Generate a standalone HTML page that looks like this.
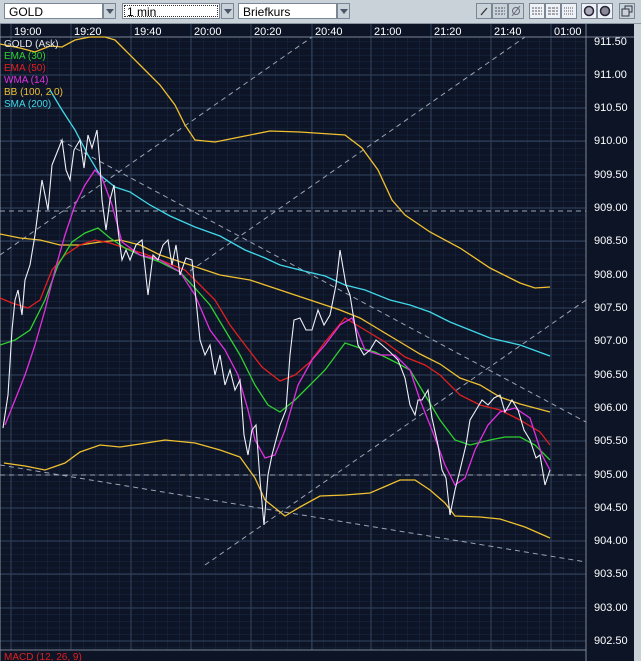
<!DOCTYPE html>
<html><head><meta charset="utf-8"><style>
html,body{margin:0;padding:0;width:641px;height:661px;overflow:hidden;background:#0c1426;font-family:"Liberation Sans",sans-serif}
.tb{position:absolute;left:0;top:0;width:641px;height:23px;background:#c9d1d9;border-bottom:1px solid #8a96a2}
.dd{position:absolute;top:3px;height:16px;background:#fff;border:1px solid #7a8694;font-size:12px;line-height:16px;padding-left:4px;box-sizing:border-box}
.ar{position:absolute;top:3px;width:13px;height:16px;background:#c9d1d9;border:1px solid #7a8694;box-sizing:border-box}
.ar:after{content:"";position:absolute;left:2px;top:5px;border-left:4px solid transparent;border-right:4px solid transparent;border-top:5px solid #4a5666}
.bt{position:absolute;top:3px;width:16px;height:16px;border:1px solid #7a8694;box-sizing:border-box;background:#c9d1d9}
.bw{background:#eef2f6}
.bt svg{position:absolute;left:1px;top:1px}
</style></head><body>
<div class="tb">
<div class="dd" style="left:4px;width:99px">GOLD</div><div class="ar" style="left:103px"></div>
<div class="dd" style="left:122px;width:98px;outline:1px dotted #333;outline-offset:-3px">1 min</div><div class="ar" style="left:221px"></div>
<div class="dd" style="left:238px;width:99px">Briefkurs</div><div class="ar" style="left:337px"></div>
<div class="bt" style="left:476px"><svg width="12" height="12"><path d="M3 10L9 3" stroke="#333" stroke-width="1.3"/></svg></div>
<div class="bt" style="left:492px"><svg width="12" height="12"><path d="M1 3H11M1 6H11M1 9H11" stroke="#556" stroke-dasharray="2,1"/></svg></div>
<div class="bt" style="left:508px"><svg width="12" height="12"><circle cx="6" cy="6" r="3.5" fill="none" stroke="#667"/><path d="M2 11L10 1" stroke="#667"/></svg></div>
<div class="bt bw" style="left:529px"><svg width="12" height="12"><path d="M1 3H11M1 6H11M1 9H11" stroke="#556" stroke-dasharray="2,1"/></svg></div>
<div class="bt bw" style="left:545px"><svg width="12" height="12"><path d="M1 3H11M1 6H11M1 9H11" stroke="#556" stroke-dasharray="3,1"/></svg></div>
<div class="bt bw" style="left:561px"><svg width="12" height="12"><path d="M1 3H11M1 6H11M1 9H11" stroke="#556" stroke-dasharray="1,1"/></svg></div>
<div class="bt bw" style="left:581px"><svg width="12" height="12"><circle cx="6" cy="6" r="4.5" fill="#aab" stroke="#223" stroke-width="1.5"/></svg></div>
<div class="bt bw" style="left:597px"><svg width="12" height="12"><circle cx="6" cy="6" r="4.5" fill="#889" stroke="#223" stroke-width="1.5"/></svg></div>
<div class="bt" style="left:619px"><svg width="12" height="12"><rect x="4" y="1" width="7" height="6" fill="none" stroke="#334"/><rect x="1" y="4" width="7" height="7" fill="#c9d1d9" stroke="#334"/></svg></div>
</div>
<svg width="641" height="661" style="position:absolute;left:0;top:0" xmlns="http://www.w3.org/2000/svg">
<defs>
<pattern id="g" x="11" y="8.3" width="12" height="6.66" patternUnits="userSpaceOnUse"><path d="M0 0V6.66M0 0H12" stroke="#1b2a44" stroke-width="1" fill="none"/></pattern>
</defs>
<rect x="0" y="37" width="586" height="613" fill="url(#g)"/>
<g stroke="#34435e" stroke-width="1">
<path d="M11 24V650M71 24V650M131 24V650M191 24V650M251 24V650M312 24V650M371 24V650M431 24V650M491 24V650M551 24V650"/>
<path d="M0 75H586M0 108H586M0 141H586M0 175H586M0 208H586M0 241H586M0 275H586M0 308H586M0 341H586M0 375H586M0 408H586M0 441H586M0 475H586M0 508H586M0 541H586M0 574H586M0 608H586M0 641H586"/>
</g>
<path d="M0 37H641M586 24V661M0 650H586" stroke="#7c8696" stroke-width="1"/>
<rect x="634" y="24" width="7" height="637" fill="#c9d1d9"/>
<path d="M0 24V661" stroke="#8a96a2"/>
<g fill="#fff" font-size="11">
<text x="14" y="35">19:00</text><text x="74" y="35">19:20</text><text x="134" y="35">19:40</text><text x="194" y="35">20:00</text><text x="254" y="35">20:20</text><text x="315" y="35">20:40</text><text x="374" y="35">21:00</text><text x="434" y="35">21:20</text><text x="494" y="35">21:40</text><text x="554" y="35">01:00</text>
</g>
<g fill="#fff" font-size="11">
<text x="594" y="45">911.50</text><text x="594" y="78">911.00</text><text x="594" y="111">910.50</text><text x="594" y="144">910.00</text><text x="594" y="178">909.50</text><text x="594" y="211">909.00</text><text x="594" y="244">908.50</text><text x="594" y="278">908.00</text><text x="594" y="311">907.50</text><text x="594" y="344">907.00</text><text x="594" y="378">906.50</text><text x="594" y="411">906.00</text><text x="594" y="444">905.50</text><text x="594" y="478">905.00</text><text x="594" y="511">904.50</text><text x="594" y="544">904.00</text><text x="594" y="577">903.50</text><text x="594" y="611">903.00</text><text x="594" y="644">902.50</text>
</g>
<g stroke="#9aa4b4" stroke-width="1" stroke-dasharray="5,4" fill="none">
<path d="M0 211H586M0 475H586"/>
<path d="M0 255L312 37"/><path d="M190 271L525 37"/><path d="M205 565L586 300"/>
<path d="M60 140L586 422"/><path d="M0 465L586 562"/>
</g>
<g fill="none" stroke-width="1.3">
<polyline stroke="#f0c030" points="0,44 20,48 35,52 50,46 62,47 75,40 90,37 105,37 115,40 125,50 140,65 160,85 175,105 185,125 195,140 215,142 240,137 270,131 300,132 345,135 362,148 378,170 392,200 405,215 430,232 460,248 490,268 520,283 535,288 550,287"/>
<polyline stroke="#f0c030" points="4,463 25,466 45,470 65,463 80,452 100,445 120,447 140,444 165,440 195,443 220,450 240,457 255,478 265,500 285,516 300,507 320,496 345,495 370,493 400,480 415,480 430,490 445,503 455,516 480,517 500,519 525,527 550,538"/>
<polyline stroke="#f0c030" points="0,234 20,238 40,240 60,245 80,245 100,242 120,240 140,245 160,255 190,265 220,275 250,280 280,290 310,300 340,310 360,318 380,330 400,342 420,354 440,364 460,378 480,385 500,397 520,404 550,412"/>
<polyline stroke="#40d8e8" points="50,90 62,110 75,130 88,155 100,175 115,187 130,192 150,205 170,216 195,227 220,236 245,250 265,258 280,265 300,270 325,276 345,285 365,290 390,300 410,305 430,312 450,322 470,330 490,338 520,345 550,356"/>
<polyline stroke="#e02020" points="0,298 12,303 28,308 40,300 52,270 65,255 80,245 95,240 110,243 125,248 145,254 165,262 185,270 200,285 215,300 230,325 245,345 262,367 280,381 295,375 310,362 325,342 345,318 365,330 385,342 405,357 425,365 440,375 460,395 480,405 500,410 520,420 540,432 550,445"/>
<polyline stroke="#30d030" points="0,345 15,340 30,330 45,300 58,265 72,242 85,233 98,228 110,238 125,248 140,255 160,262 180,272 195,288 210,305 225,330 240,355 255,385 268,405 280,412 295,400 310,385 325,370 345,343 360,348 375,352 395,362 410,370 425,395 440,420 455,440 470,445 490,440 505,437 520,437 535,445 550,460"/>
<polyline stroke="#e030e0" points="5,425 15,400 25,375 35,345 45,310 55,270 65,235 75,205 85,185 95,170 102,178 112,205 122,242 140,255 160,260 180,272 195,295 210,330 225,350 238,375 248,410 255,440 265,458 275,455 285,430 298,385 312,360 325,345 340,325 352,318 365,350 380,355 395,355 410,370 420,400 432,430 445,465 455,485 465,478 475,450 488,425 500,412 515,408 530,418 542,455 550,470"/>
<polyline stroke="#f0f0f8" stroke-width="1.1" points="3,428 8,395 12,330 15,300 18,290 22,315 25,280 30,265 35,235 42,180 48,210 52,165 58,150 62,140 66,170 70,180 74,150 80,140 84,168 88,135 92,148 97,130 100,165 102,200 106,230 110,200 114,185 118,230 122,260 126,250 130,260 136,245 142,240 148,295 153,255 158,260 163,245 168,240 172,265 176,245 180,275 186,258 192,260 196,300 200,340 205,355 210,345 215,375 220,355 225,385 230,370 235,390 240,380 244,435 248,455 252,430 256,425 260,480 264,525 268,475 272,455 276,440 280,425 286,410 290,355 294,320 300,318 306,330 312,330 318,310 324,325 330,315 336,285 340,250 346,285 350,295 354,320 358,345 364,355 370,350 376,340 382,345 390,352 398,360 405,378 410,405 415,415 418,400 422,400 428,390 432,418 438,445 442,470 446,478 450,515 455,490 460,470 466,445 470,420 476,410 482,400 488,405 494,398 500,395 505,412 512,400 518,410 524,430 530,440 536,458 540,455 545,485 550,470"/>
</g>
<g font-size="10">
<text x="4" y="47" fill="#e8e8e8">GOLD (Ask)</text>
<text x="4" y="59" fill="#30d030">EMA (30)</text>
<text x="4" y="71" fill="#e02020">EMA (50)</text>
<text x="4" y="83" fill="#e030e0">WMA (14)</text>
<text x="4" y="95" fill="#f0c030">BB (100, 2.0)</text>
<text x="4" y="107" fill="#40d8e8">SMA (200)</text>
<text x="4" y="660" fill="#e02020">MACD (12, 26, 9)</text>
</g>
</svg>
</body></html>
